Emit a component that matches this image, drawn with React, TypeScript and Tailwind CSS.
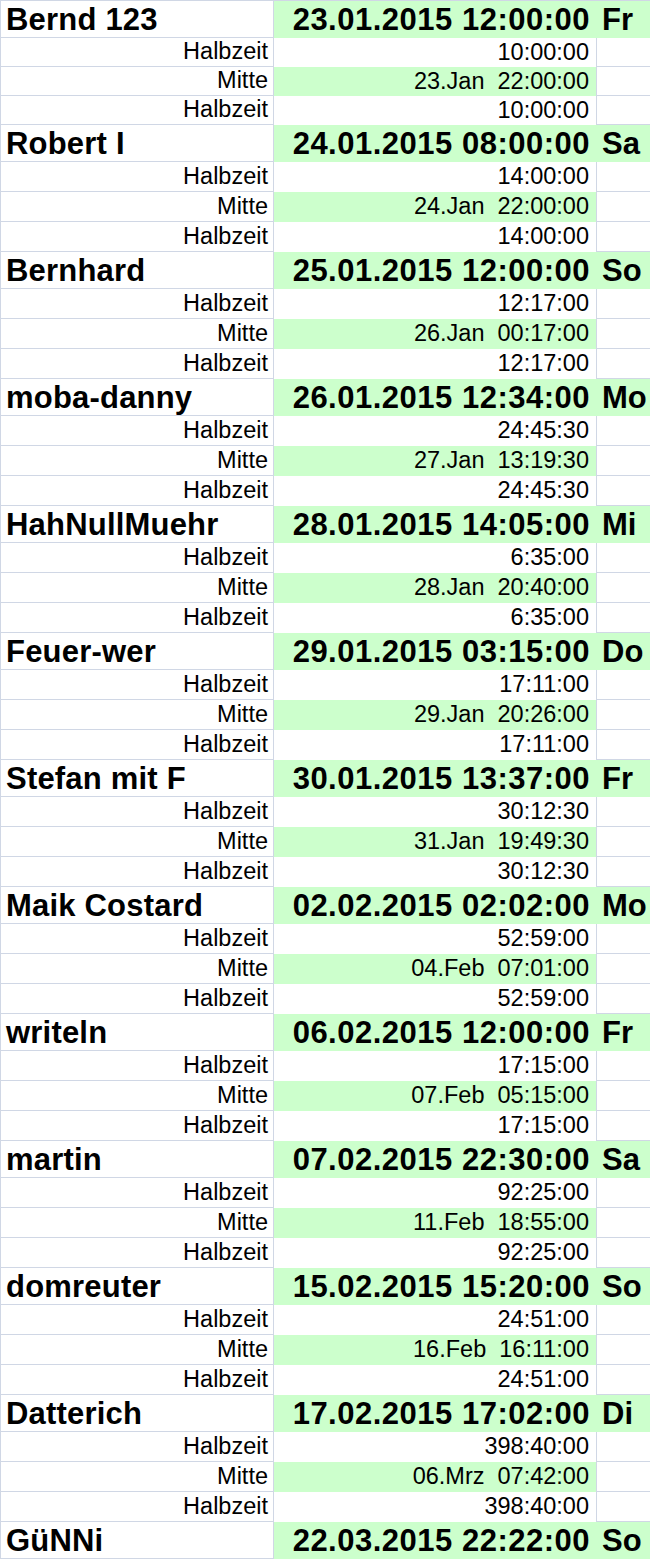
import clsx from 'clsx';

type Entry = {
  name: string;
  start: string;
  day: string;
  half?: string;
  mid?: string;
};

const entries: Entry[] = [
  { name: 'Bernd 123', start: '23.01.2015 12:00:00', day: 'Fr', half: '10:00:00', mid: '23.Jan  22:00:00' },
  { name: 'Robert I', start: '24.01.2015 08:00:00', day: 'Sa', half: '14:00:00', mid: '24.Jan  22:00:00' },
  { name: 'Bernhard', start: '25.01.2015 12:00:00', day: 'So', half: '12:17:00', mid: '26.Jan  00:17:00' },
  { name: 'moba-danny', start: '26.01.2015 12:34:00', day: 'Mo', half: '24:45:30', mid: '27.Jan  13:19:30' },
  { name: 'HahNullMuehr', start: '28.01.2015 14:05:00', day: 'Mi', half: '6:35:00', mid: '28.Jan  20:40:00' },
  { name: 'Feuer-wer', start: '29.01.2015 03:15:00', day: 'Do', half: '17:11:00', mid: '29.Jan  20:26:00' },
  { name: 'Stefan mit F', start: '30.01.2015 13:37:00', day: 'Fr', half: '30:12:30', mid: '31.Jan  19:49:30' },
  { name: 'Maik Costard', start: '02.02.2015 02:02:00', day: 'Mo', half: '52:59:00', mid: '04.Feb  07:01:00' },
  { name: 'writeln', start: '06.02.2015 12:00:00', day: 'Fr', half: '17:15:00', mid: '07.Feb  05:15:00' },
  { name: 'martin', start: '07.02.2015 22:30:00', day: 'Sa', half: '92:25:00', mid: '11.Feb  18:55:00' },
  { name: 'domreuter', start: '15.02.2015 15:20:00', day: 'So', half: '24:51:00', mid: '16.Feb  16:11:00' },
  { name: 'Datterich', start: '17.02.2015 17:02:00', day: 'Di', half: '398:40:00', mid: '06.Mrz  07:42:00' },
  { name: 'GüNNi', start: '22.03.2015 22:22:00', day: 'So' },
];

function HeaderRow({ e }: { e: Entry }) {
  return (
    <div className="flex h-[37px] text-[31px] font-bold leading-none">
      <div className="w-[274px] shrink-0 flex items-center pl-[5px] bg-white border-l border-r border-b border-[#d0d7e5] tracking-[0.2px]">
        {e.name}
      </div>
      <div className="flex-1 flex bg-[#ccffcc]">
        <div className="w-[323px] shrink-0 flex items-center justify-end pr-[7px] tracking-[0.5px]">
          {e.start}
        </div>
        <div className="flex-1 flex items-center pl-[5px]">{e.day}</div>
      </div>
    </div>
  );
}

function SubRow({ label, value, green, tall }: { label: string; value: string; green?: boolean; tall: boolean }) {
  return (
    <div className={clsx('flex text-[23.5px] leading-none', tall ? 'h-[30px]' : 'h-[29px]')}>
      <div className="w-[274px] shrink-0 flex items-center justify-end pr-[5px] bg-white border-l border-r border-b border-[#d0d7e5]">
        {label}
      </div>
      <div
        className={clsx(
          'w-[323px] shrink-0 flex items-center justify-end pr-[7px] whitespace-pre border-r border-[#d0d7e5]',
          green ? 'bg-[#ccffcc]' : 'bg-white'
        )}
      >
        {value}
      </div>
      <div className="flex-1 bg-white border-b border-[#d0d7e5]" />
    </div>
  );
}

export default function App() {
  return (
    <div className="w-[650px] h-[1559px] overflow-hidden bg-white text-black font-['Liberation_Sans',Arial,sans-serif]">
      <div className="flex flex-col border-t border-[#d0d7e5]">
        {entries.map((e, i) => (
          <div key={e.name} className="flex flex-col">
            <HeaderRow e={e} />
            {e.half && e.mid && (
              <>
                <SubRow label="Halbzeit" value={e.half} tall={i > 0} />
                <SubRow label="Mitte" value={e.mid} green tall={i > 0} />
                <SubRow label="Halbzeit" value={e.half} tall={i > 0} />
              </>
            )}
          </div>
        ))}
      </div>
    </div>
  );
}
